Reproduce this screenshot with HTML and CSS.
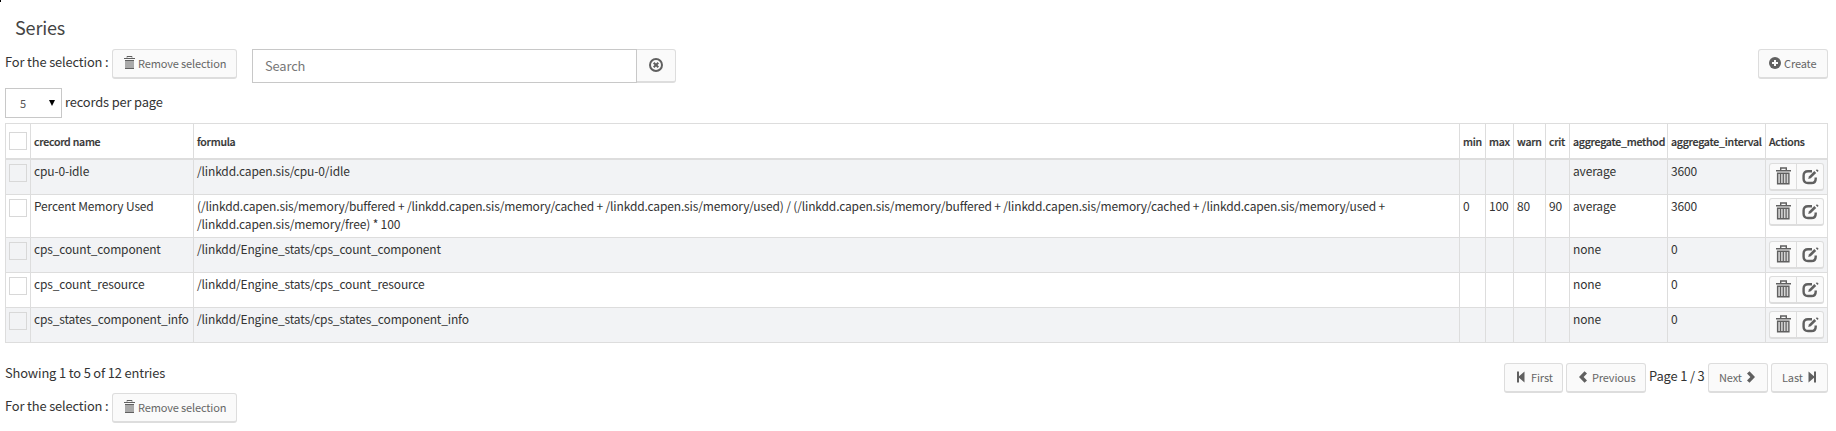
FILE: index.html
```
<!DOCTYPE html>
<html lang="en">
<head>
<meta charset="utf-8">
<title>Series</title>
<link rel="stylesheet" href="styles.css">
</head>
<body>
<svg class="defs" width="0" height="0">
  <symbol id="trash" viewBox="0 0 15 18"><path d="M4.700 3V1h5.600v2M0 3.700h15" fill="none" stroke="currentColor" stroke-width="1.400"/><path d="M1.600 6.200v10.600h11.300V6.200z" fill="#d4d4d4" stroke="currentColor" stroke-width="1.400"/><path d="M4.500 6v10.500M7.300 6v10.500M10.100 6v10.500" stroke="currentColor" stroke-width="1.200"/></symbol>
  <symbol id="trash-small" viewBox="0 0 11 14"><path d="M3 1.500V.500h5v1M0 2.500h11" fill="none" stroke="currentColor"/><path d="M1 4h9v9H1z" fill="#aaa"/><path d="M1 4.500h9M1 12.500h9" stroke="currentColor"/></symbol>
  <symbol id="edit" viewBox="0 0 17 16"><path d="M10 2.200H6Q1.600 2.200 1.600 6.500v3.200Q1.600 14 6 14h3.400Q13.700 14 13.700 9.700V8.500" fill="none" stroke="currentColor" stroke-width="2.400"/><path d="M6.200 10l.700-2.600 5.400-5.400 1.900 1.900L8.800 9.300z" fill="currentColor"/><path d="M14.400.700l1.700 1.700" stroke="currentColor" stroke-width="1.600"/></symbol>
  <symbol id="first" viewBox="0 0 8 12"><path d="M0 .500h2v4.700L7.500.500v11L2 6.800v4.700H0z" fill="currentColor"/></symbol>
  <symbol id="chevron" viewBox="0 0 8 12"><path d="M5.500.200L8 2.400 4.600 6 8 9.600 5.500 11.800 0 6z" fill="currentColor"/></symbol>
</svg>
<i class="corner"></i>
<h1 class="title">Series</h1>
<div class="toolbar">
  <span class="label">For the selection :</span>
  <button class="btn remove"><svg class="ico-trash"><use href="#trash-small"/></svg><span>Remove selection</span></button>
  <div class="search">
    <input class="search-input" type="text" placeholder="Search">
    <button class="search-clear"><svg width="14" height="14" viewBox="0 0 14 14"><circle cx="7" cy="7" r="6" fill="none" stroke="currentColor" stroke-width="2"/><path d="M4.700 4.700l4.600 4.600M9.300 4.700L4.700 9.300" stroke="currentColor" stroke-width="2"/></svg></button>
  </div>
  <button class="btn create"><svg width="12" height="12" viewBox="0 0 12 12"><circle cx="6" cy="6" r="6" fill="currentColor"/><path d="M6 3v6M3 6h6" stroke="#fafafa" stroke-width="2"/></svg><span>Create</span></button>
</div>
<div class="length">
  <div class="select"><span>5</span><i class="arrow"></i></div>
  <span class="label">records per page</span>
</div>
<table class="grid">
  <colgroup><col class="c-check"><col class="c-name"><col class="c-formula"><col class="c-min"><col class="c-max"><col class="c-warn"><col class="c-crit"><col class="c-agg"><col class="c-agg"><col class="c-actions"></colgroup>
  <thead>
    <tr><th><i class="check"></i></th><th>crecord name</th><th>formula</th><th>min</th><th>max</th><th>warn</th><th>crit</th><th>aggregate_method</th><th>aggregate_interval</th><th>Actions</th></tr>
  </thead>
  <tbody>
    <tr><td><i class="check"></i></td><td>cpu-0-idle</td><td>/linkdd.capen.sis/cpu-0/idle</td><td></td><td></td><td></td><td></td><td>average</td><td>3600</td><td><div class="actions"><button><svg class="a-trash"><use href="#trash"/></svg></button><button><svg class="a-edit"><use href="#edit"/></svg></button></div></td></tr>
    <tr class="tall"><td><i class="check"></i></td><td>Percent Memory Used</td><td>(/linkdd.capen.sis/memory/buffered + /linkdd.capen.sis/memory/cached + /linkdd.capen.sis/memory/used) / (/linkdd.capen.sis/memory/buffered + /linkdd.capen.sis/memory/cached + /linkdd.capen.sis/memory/used +<br>/linkdd.capen.sis/memory/free) * 100</td><td>0</td><td>100</td><td>80</td><td>90</td><td>average</td><td>3600</td><td><div class="actions"><button><svg class="a-trash"><use href="#trash"/></svg></button><button><svg class="a-edit"><use href="#edit"/></svg></button></div></td></tr>
    <tr><td><i class="check"></i></td><td>cps_count_component</td><td>/linkdd/Engine_stats/cps_count_component</td><td></td><td></td><td></td><td></td><td>none</td><td>0</td><td><div class="actions"><button><svg class="a-trash"><use href="#trash"/></svg></button><button><svg class="a-edit"><use href="#edit"/></svg></button></div></td></tr>
    <tr><td><i class="check"></i></td><td>cps_count_resource</td><td>/linkdd/Engine_stats/cps_count_resource</td><td></td><td></td><td></td><td></td><td>none</td><td>0</td><td><div class="actions"><button><svg class="a-trash"><use href="#trash"/></svg></button><button><svg class="a-edit"><use href="#edit"/></svg></button></div></td></tr>
    <tr><td><i class="check"></i></td><td>cps_states_component_info</td><td>/linkdd/Engine_stats/cps_states_component_info</td><td></td><td></td><td></td><td></td><td>none</td><td>0</td><td><div class="actions"><button><svg class="a-trash"><use href="#trash"/></svg></button><button><svg class="a-edit"><use href="#edit"/></svg></button></div></td></tr>
  </tbody>
</table>
<div class="footer">
  <span class="label info">Showing 1 to 5 of 12 entries</span>
  <div class="pager">
    <button class="btn first"><svg class="ico-nav"><use href="#first"/></svg><span>First</span></button>
    <button class="btn prev"><svg class="ico-nav"><use href="#chevron"/></svg><span>Previous</span></button>
    <span class="label page">Page 1 / 3</span>
    <button class="btn next"><span>Next</span><svg class="ico-nav flip"><use href="#chevron"/></svg></button>
    <button class="btn last"><span>Last</span><svg class="ico-nav flip"><use href="#first"/></svg></button>
  </div>
</div>
<div class="bottom">
  <span class="label">For the selection :</span>
  <button class="btn remove"><svg class="ico-trash"><use href="#trash-small"/></svg><span>Remove selection</span></button>
</div>
</body>
</html>
```
FILE: styles.css
```
* { box-sizing: border-box; }
body {
  margin: 0;
  padding: 0 8px 0 5px;
  height: 431px;
  overflow: hidden;
  background: #fff;
  color: #333;
  font-family: "Noto Sans CJK SC", "Noto Sans", sans-serif;
  font-size: 12.9px;
  letter-spacing: -0.15px;
}
.defs, .corner { position: absolute; }
.corner { left: 0; top: 0; width: 1px; height: 2px; background: #000; }
button { font-family: inherit; margin: 0; padding: 0; color: #666; }
svg { display: block; flex: none; color: #606060; }
.title {
  margin: 0;
  padding: 13px 0 0 10px;
  height: 49px;
  font-size: 18px;
  line-height: 28px;
  font-weight: 400;
  color: #444;
}
.toolbar { display: flex; align-items: flex-start; height: 39px; }
.label { line-height: 20px; white-space: nowrap; }
.toolbar .label, .bottom .label { width: 107px; padding-top: 3px; }
.btn {
  display: flex;
  align-items: center;
  height: 30px;
  padding: 0 0 2px;
  border: 1px solid #ddd;
  border-bottom-width: 2px;
  border-radius: 3px;
  background: #fafafa;
  font-size: 11px;
  letter-spacing: -0.14px;
  line-height: 18px;
  white-space: nowrap;
}
.remove { width: 125px; padding-left: 11px; gap: 3px; }
.ico-trash { width: 11px; height: 14px; }
.search { display: flex; margin-left: 15px; width: 424px; height: 34px; }
.search-input {
  width: 385px;
  height: 34px;
  padding: 0 12px 1px;
  border: 1px solid #c8c8c8;
  font: inherit;
  letter-spacing: inherit;
  color: #555;
}
.search-input::placeholder { color: #777; opacity: 1; }
.search-clear {
  flex: 1;
  display: flex;
  align-items: center;
  justify-content: center;
  height: 34px;
  padding-bottom: 2px;
  border: solid #ddd;
  border-width: 1px 1px 2px 0;
  border-radius: 0 3px 3px 0;
  background: #fafafa;
}
.create { margin-left: auto; width: 70px; padding-left: 10px; gap: 3px; }
.length { display: flex; height: 35px; }
.length .label { padding: 4px 0 0 3px; }
.select {
  display: flex;
  align-items: center;
  justify-content: space-between;
  width: 57px;
  height: 30px;
  padding: 0 6px 0 14px;
  border: 1px solid #c8c8c8;
  font-size: 11px;
  color: #555;
}
.arrow { border: solid transparent; border-width: 6px 3px 0; border-top-color: #000; margin-bottom: 1px; }
.grid { table-layout: fixed; width: 1823px; border-spacing: 0; border-top: 1px solid #ddd; border-right: 1px solid #ddd; }
.c-check { width: 25px; }
.c-name { width: 163px; }
.c-formula { width: 1266px; }
.c-min { width: 26px; }
.c-max { width: 28px; }
.c-warn { width: 32px; }
.c-crit { width: 24px; }
.c-agg { width: 98px; }
.c-actions { width: 62px; }
.grid th, .grid td { border: solid #ddd; border-width: 0 0 1px 1px; padding: 0 0 0 3px; text-align: left; white-space: nowrap; }
.grid th { height: 36px; padding-top: 2px; border-bottom-width: 2px; font-size: 10.6px; letter-spacing: -0.25px; line-height: 18px; font-weight: 500; -webkit-text-stroke: 0.2px; }
.grid th .check { margin: 0 0 2px; }
.grid td { height: 35px; vertical-align: top; font-size: 12px; letter-spacing: -0.15px; line-height: 18px; padding-top: 2px; }
.grid .tall td { height: 43px; }
.grid tbody tr:nth-child(odd) td { background: #f2f3f5; }
.check { display: block; width: 18px; height: 18px; border: 1px solid #d8d8d8; margin-top: 2px; }
.actions { display: flex; width: 55px; height: 28px; margin-top: 1px; border: 1px solid #ddd; border-bottom-width: 2px; border-radius: 3px; background: #fafafa; }
.actions button { display: flex; align-items: center; justify-content: center; width: 26px; border: 0; background: none; }
.actions button:first-child { width: 27px; border-right: 1px solid #ddd; }
.a-trash { width: 15px; height: 18px; margin-bottom: 2px; }
.a-edit { width: 17px; height: 16px; }
.footer { display: flex; justify-content: space-between; height: 50px; padding-top: 20px; }
.pager { display: flex; }
.first { width: 59px; padding-left: 12px; gap: 6px; margin-right: 3px; }
.prev { width: 80px; padding-left: 12px; gap: 5px; }
.page { width: 62px; padding-left: 3px; padding-top: 3px; }
.next { width: 60px; padding-left: 10px; gap: 5px; margin-right: 3px; }
.last { width: 57px; padding-left: 10px; gap: 5px; }
.ico-nav { width: 8px; height: 12px; }
.flip { transform: scaleX(-1); }
.bottom { display: flex; }
```
